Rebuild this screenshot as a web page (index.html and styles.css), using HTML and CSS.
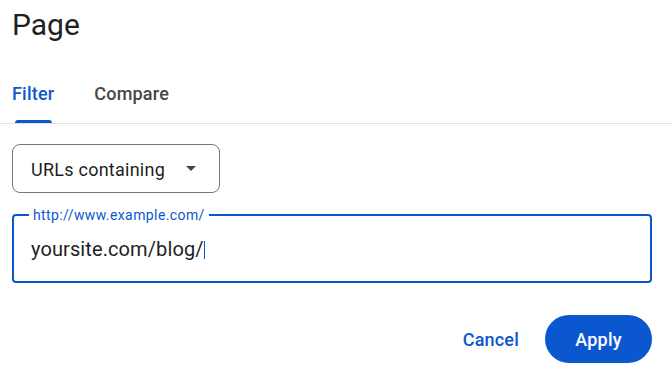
FILE: index.html
```html
<!DOCTYPE html>
<html lang="en">
<head>
    <meta charset="UTF-8">
    <title>Page filter</title>
    <link rel="stylesheet" href="styles.css">
</head>
<body>
    <h1 class="title">Page</h1>

    <!-- Tabs -->
    <div class="tabs">
        <div class="tab active">Filter</div>
        <div class="tab">Compare</div>
    </div>

    <div class="content">
        <div class="select">
            <span>URLs containing</span>
            <span class="arrow"></span>
        </div>

        <div class="field">
            <label class="field-label">http://www.example.com/</label>
            <div class="field-value">yoursite.com/blog/<span class="caret"></span></div>
        </div>

        <div class="actions">
            <button class="btn-text">Cancel</button>
            <button class="btn-filled">Apply</button>
        </div>
    </div>
</body>
</html>
```

FILE: styles.css
```css
body {
    margin: 0;
    font-family: Roboto, "Noto Sans", sans-serif;
    background-color: #fff;
    color: #1f1f1f;
}
.title {
    margin: 0;
    padding: 7px 12px 0;
    font-size: 30px;
    font-weight: 400;
    line-height: 36px;
}
.tabs {
    display: flex;
    gap: 40px;
    padding-left: 12px;
    border-bottom: 1px solid #e3e3e3;
    margin-top: 40px;
}
.tab {
    position: relative;
    padding-bottom: 18px;
    font-size: 18px;
    font-weight: 500;
    line-height: 22px;
    letter-spacing: 0.2px;
    color: #444746;
}
.tab.active {
    color: #0b57d0;
}
.tab.active::after {
    content: "";
    position: absolute;
    left: 3px;
    right: 2px;
    bottom: 0;
    height: 3px;
    background-color: #0b57d0;
    border-radius: 3px 3px 0 0;
}
.content {
    padding: 20px 20px 0 12px;
}
.select {
    display: flex;
    align-items: center;
    justify-content: space-between;
    width: 208px;
    height: 49px;
    box-sizing: border-box;
    padding: 2px 23px 0 18px;
    border: 1px solid #747775;
    border-radius: 8px;
    font-size: 18px;
    letter-spacing: 0.25px;
}
.arrow {
    width: 0;
    height: 0;
    border-left: 5px solid transparent;
    border-right: 5px solid transparent;
    border-top: 5px solid #444746;
    margin-top: -2px;
}
.field {
    position: relative;
    margin-top: 21px;
    height: 69px;
    box-sizing: border-box;
    border: 2px solid #0b57d0;
    border-radius: 4px;
    display: flex;
    align-items: center;
    padding-left: 17px;
}
.field-label {
    position: absolute;
    top: -9px;
    left: 15px;
    padding: 0 4px;
    background-color: #fff;
    font-size: 14px;
    line-height: 16px;
    letter-spacing: 0.4px;
    color: #0b57d0;
}
.field-value {
    font-size: 20px;
    letter-spacing: 0.1px;
    color: #1f1f1f;
    margin-top: 1px;
}
.caret {
    display: inline-block;
    width: 1px;
    height: 18px;
    background-color: #0b57d0;
    vertical-align: -3px;
}
.actions {
    display: flex;
    justify-content: flex-end;
    align-items: center;
    gap: 14px;
    margin-top: 32px;
}
button {
    font-family: inherit;
    font-size: 18px;
    font-weight: 500;
    letter-spacing: 0.2px;
    border: none;
    cursor: pointer;
}
.btn-text {
    background: none;
    color: #0b57d0;
    padding: 0 12px;
    height: 48px;
}
.btn-filled {
    background-color: #0b57d0;
    color: #fff;
    width: 107px;
    height: 48px;
    border-radius: 24px;
}
```
